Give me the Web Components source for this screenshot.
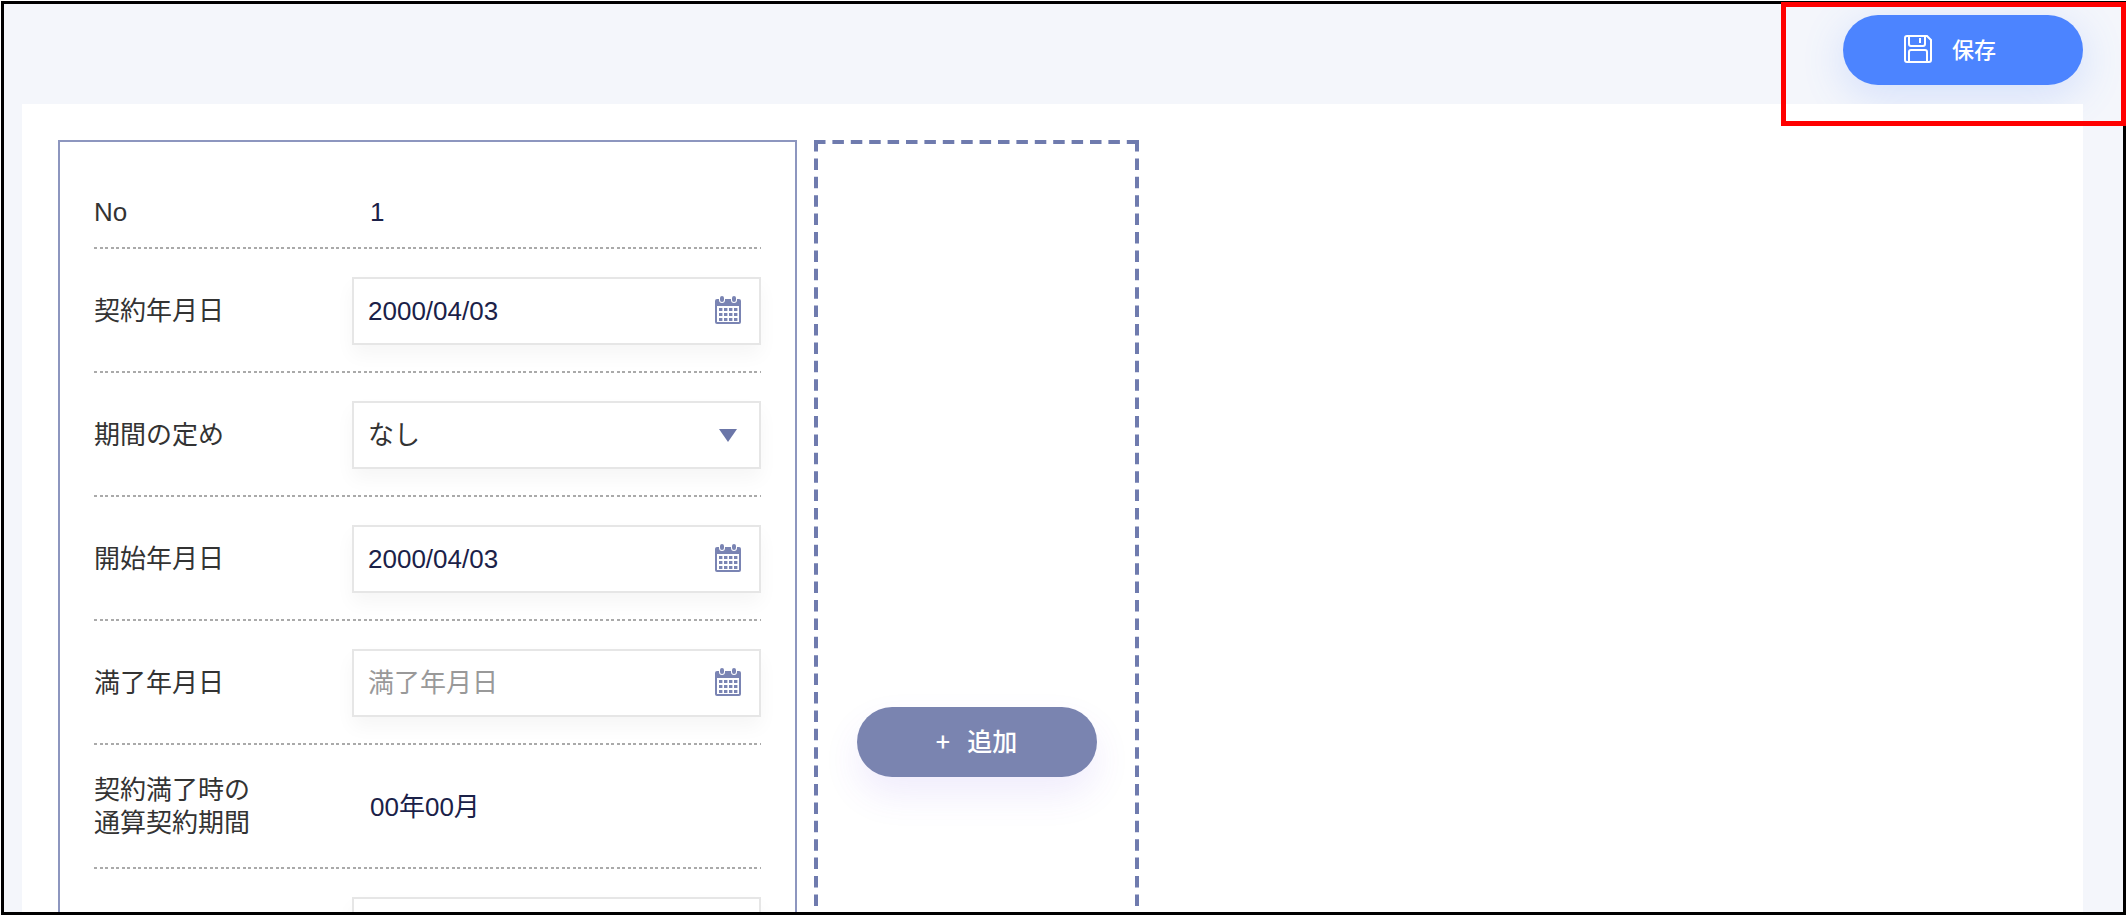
<!DOCTYPE html>
<html lang="ja">
<head>
<meta charset="UTF-8">
<meta name="viewport" content="width=device-width, initial-scale=1">
<title>契約期間</title>
<style>
  html, body {
    margin: 0;
    height: 100%;
    background: #fff;
  }

  body {
    display: flex;
    overflow: hidden;
    font-family: "Liberation Sans", "Noto Sans CJK JP", sans-serif;
    font-size: 26px;
    line-height: 33px;
    color: #333;
  }
</style>
</head>
<body>
<app-screen>
  <save-button slot="action">保存</save-button>
  <contract-card>
    <value-row label="No" value="1"></value-row>
    <date-row label="契約年月日" value="2000/04/03"></date-row>
    <select-row label="期間の定め" value="なし"></select-row>
    <date-row label="開始年月日" value="2000/04/03"></date-row>
    <date-row label="満了年月日" placeholder="満了年月日"></date-row>
    <value-row label="契約満了時の&#10;通算契約期間" value="00年00月"></value-row>
    <date-row></date-row>
  </contract-card>
  <add-panel>追加</add-panel>
</app-screen>

<script>
const buttonStyle = `
  button {
    display: flex;
    align-items: center;
    justify-content: center;
    box-sizing: border-box;
    width: 240px;
    height: 70px;
    border: 0;
    border-radius: 35px;
    color: #fff;
    font-family: "Noto Sans CJK JP", sans-serif;
    font-weight: 500;
    cursor: pointer;
  }

  button span {
    padding-bottom: 4px;
  }
`;

const rowStyle = `
  :host {
    display: block;
  }

  .row {
    display: grid;
    grid-template-columns: 258px minmax(0, 1fr);
    align-items: center;
    padding: 28px 0 26px;
  }

  /* fine dashed rule below each row */
  .rule {
    height: 2px;
    background: linear-gradient(90deg, #aaa 0 3px, transparent 3px 6px, #aaa 6px 9px, transparent 9px) 0 0 / 11px 2px;
  }

  label, .label {
    white-space: pre-line;
  }

  .field {
    display: flex;
    align-items: center;
    box-sizing: border-box;
    height: 68px;
    border: 2px solid #e6e6e6;
    background: #fff;
    box-shadow: 0 10px 18px rgba(0, 0, 0, 0.04);
  }

  input, select {
    flex: 1;
    min-width: 0;
    height: 100%;
    box-sizing: border-box;
    padding: 0 14px;
    border: 0;
    outline: 0;
    background: none;
    font: inherit;
    color: #1b2148;
  }

  select {
    appearance: none;
    color: #333;
  }

  input::placeholder {
    color: #999;
    opacity: 1;
  }
`;

class AppScreen extends HTMLElement {
  constructor() {
    super();
    this.attachShadow({ mode: 'open' });
  }

  connectedCallback() {
    this.shadowRoot.innerHTML = `
      <style>
        :host {
          position: relative;
          flex: 1;
          min-width: 0;
          box-sizing: border-box;
          margin: 1px;
          border: 3px solid #000;
          background: #f4f6fb;
        }

        .clip {
          display: flex;
          flex-direction: column;
          height: 100%;
          overflow: hidden;
        }

        header {
          display: flex;
          justify-content: flex-end;
          padding: 11px 40px 19px;
        }

        main {
          position: relative;
          flex: 1 0 auto;
          display: flex;
          align-items: stretch;
          gap: 17px;
          margin: 0 40px 0 18px;
          padding: 36px;
          background: #fff;
        }

        /* frame drawn over the save area */
        .highlight {
          position: absolute;
          top: -2px;
          right: -3px;
          z-index: 1;
          box-sizing: border-box;
          width: 345px;
          height: 124px;
          border: 5px solid #f00;
          pointer-events: none;
        }
      </style>
      <div class="clip">
        <header><slot name="action"></slot></header>
        <main><slot></slot></main>
      </div>
      <div class="highlight"></div>
    `;
  }
}

class SaveButton extends HTMLElement {
  constructor() {
    super();
    this.attachShadow({ mode: 'open' });
  }

  connectedCallback() {
    this.shadowRoot.innerHTML = `
      <style>
        ${buttonStyle}
        :host {
          display: block;
        }

        button {
          gap: 20px;
          padding: 0 26px 0 0;
          background: #4c84ff;
          font-size: 22px;
          box-shadow: 0 10px 44px rgba(76, 132, 255, 0.2);
        }

        svg {
          padding-bottom: 2px;
        }
      </style>
      <button type="button">
        <svg width="28" height="28" viewBox="0 0 28 28" fill="none" stroke="#fff" stroke-width="2" aria-hidden="true">
          <path d="M3 1H23L27 5V25Q27 27 25 27H3Q1 27 1 25V3Q1 1 3 1Z"/>
          <path d="M5 1V9Q5 11 7 11H19Q21 11 21 9V1M16 3V8"/>
          <path d="M5 27V17Q5 15 7 15H21Q23 15 23 17V27"/>
        </svg>
        <span><slot></slot></span>
      </button>
    `;
  }
}

class ContractCard extends HTMLElement {
  constructor() {
    super();
    this.attachShadow({ mode: 'open' });
  }

  connectedCallback() {
    this.shadowRoot.innerHTML = `
      <style>
        :host {
          flex: 0 1 739px;
          min-width: 0;
          min-height: 1204px;
          box-sizing: border-box;
          padding: 26px 34px;
          border: 2px solid #8d96bf;
        }
      </style>
      <slot></slot>
    `;
  }
}

class AddPanel extends HTMLElement {
  constructor() {
    super();
    this.attachShadow({ mode: 'open' });
  }

  connectedCallback() {
    this.shadowRoot.innerHTML = `
      <style>
        ${buttonStyle}
        :host {
          position: relative;
          flex: 0 0 325px;
          display: flex;
          align-items: center;
          justify-content: center;
        }

        .outline {
          position: absolute;
          inset: 0;
          width: 100%;
          height: 100%;
        }

        button {
          position: relative;
          gap: 17px;
          padding: 0;
          background: #7a84b0;
          font-size: 25px;
          box-shadow: 0 18px 36px rgba(112, 64, 230, 0.1);
        }
      </style>
      <svg class="outline" fill="none" stroke="#6f7bae" stroke-width="4" aria-hidden="true">
        <line x1="0" y1="2" x2="100%" y2="2" stroke-dasharray="11.5 6.9"/>
        <line x1="2" y1="0" x2="2" y2="100%" stroke-dasharray="11.5 6.9"/>
        <line x1="323" y1="0" x2="323" y2="100%" stroke-dasharray="11.5 6.9"/>
        <line x1="0" y1="1202" x2="100%" y2="1202" stroke-dasharray="11.5 6.9"/>
      </svg>
      <button type="button"><span>+</span><span><slot></slot></span></button>
    `;
  }
}

class ValueRow extends HTMLElement {
  constructor() {
    super();
    this.attachShadow({ mode: 'open' });
  }

  connectedCallback() {
    this.shadowRoot.innerHTML = `
      <style>
        ${rowStyle}
        .row {
          min-height: 68px;
        }

        :host(:first-child) .row {
          min-height: 0;
          padding-bottom: 18px;
        }

        .value {
          padding-left: 18px;
          color: #1b2148;
        }
      </style>
      <div class="row">
        <span class="label">${this.getAttribute('label')}</span>
        <span class="value">${this.getAttribute('value')}</span>
      </div>
      <div class="rule"></div>
    `;
  }
}

class DateRow extends HTMLElement {
  constructor() {
    super();
    this.attachShadow({ mode: 'open' });
  }

  connectedCallback() {
    const label = this.getAttribute('label') || '';
    this.shadowRoot.innerHTML = `
      <style>
        ${rowStyle}
        button {
          display: flex;
          padding: 0;
          margin-right: 17px;
          border: 0;
          background: none;
          cursor: pointer;
        }
      </style>
      <div class="row">
        <label for="date">${label}</label>
        <div class="field">
          <input id="date" type="text" value="${this.getAttribute('value') || ''}" placeholder="${this.getAttribute('placeholder') || ''}">
          <button type="button" aria-label="カレンダー">
            <svg width="28" height="30" viewBox="0 0 28 30" aria-hidden="true">
              <path fill="#7a84b3" d="M3 3H25Q27 3 27 5V26Q27 28 25 28H3Q1 28 1 26V5Q1 3 3 3Z"/>
              <path fill="#fff" d="M3 10H25V26H3Z"/>
              <path fill="none" stroke="#fff" stroke-width="6" stroke-linecap="round" d="M8 2V4M20 2V4"/>
              <path fill="none" stroke="#7a84b3" stroke-width="4" stroke-linecap="round" d="M8 2V4M20 2V4"/>
              <path fill="none" stroke="#7a84b3" stroke-width="3" stroke-dasharray="3.4 1.6" d="M5 13.5H23.4M5 18.5H23.4M5 23.5H23.4"/>
            </svg>
          </button>
        </div>
      </div>
      <div class="rule"></div>
    `;
  }
}

class SelectRow extends HTMLElement {
  constructor() {
    super();
    this.attachShadow({ mode: 'open' });
  }

  connectedCallback() {
    this.shadowRoot.innerHTML = `
      <style>
        ${rowStyle}
        .field {
          display: grid;
          align-items: center;
        }

        select, svg {
          grid-area: 1 / 1;
        }

        select {
          width: 100%;
        }

        svg {
          justify-self: end;
          margin-right: 21px;
          pointer-events: none;
        }
      </style>
      <div class="row">
        <label for="term">${this.getAttribute('label')}</label>
        <div class="field">
          <select id="term"><option>${this.getAttribute('value')}</option></select>
          <svg width="20" height="14" viewBox="0 0 20 14" aria-hidden="true">
            <path fill="#6b76a8" d="M1 1H19L10 14Z"/>
          </svg>
        </div>
      </div>
      <div class="rule"></div>
    `;
  }
}

customElements.define('app-screen', AppScreen);
customElements.define('save-button', SaveButton);
customElements.define('contract-card', ContractCard);
customElements.define('add-panel', AddPanel);
customElements.define('value-row', ValueRow);
customElements.define('date-row', DateRow);
customElements.define('select-row', SelectRow);
</script>
</body>
</html>
